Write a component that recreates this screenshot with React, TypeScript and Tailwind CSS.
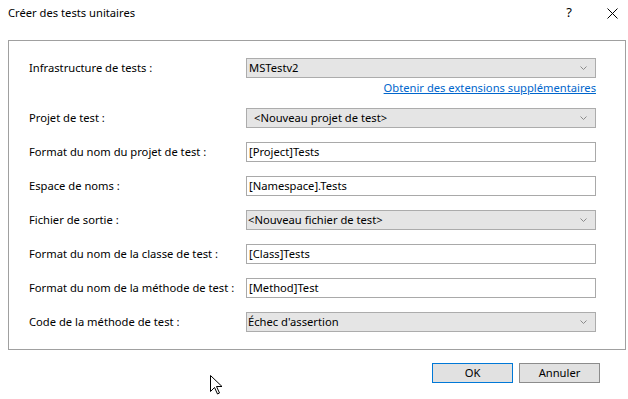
import React from 'react';

const font = { fontFamily: '"Noto Sans", "Segoe UI", Arial, sans-serif' };

const Chevron = () => (
  <svg width="7" height="5" viewBox="0 0 7 5" className="absolute right-[8px] top-1/2 -translate-y-1/2">
    <path d="M0.5 1 L3.5 4 L6.5 1" fill="none" stroke="#8a8a8a" strokeWidth="1" />
  </svg>
);

const Select = ({ value, pad = 'pl-[2px]' }: { value: string; pad?: string }) => (
  <div className={`relative flex h-[20px] w-[350px] items-center border border-[#acacac] bg-[#e5e5e5] ${pad} text-[11.2px] text-black`}>
    <span className="leading-none">{value}</span>
    <Chevron />
  </div>
);

const Input = ({ value }: { value: string }) => (
  <div className="flex h-[20px] w-[350px] items-center border border-[#a9a9a9] bg-white pl-[2px] text-[11.2px] text-black">
    <span className="leading-none">{value}</span>
  </div>
);

const Row = ({ label, children }: { label: string; children: React.ReactNode }) => (
  <div className="flex h-[20px] items-center">
    <div className="w-[217px] whitespace-nowrap text-[11.2px] text-black">{label}</div>
    {children}
  </div>
);

export default function App() {
  return (
    <div className="relative h-[399px] w-[628px] overflow-hidden bg-white" style={font}>
      {/* Title bar */}
      <div className="flex h-[26px] items-center pl-[8px] pr-[10px]">
        <span className="text-[11.2px] text-black">Créer des tests unitaires</span>
        <span className="ml-auto mr-[35px] text-[13px] text-black">?</span>
        <svg width="11" height="11" viewBox="0 0 11 11">
          <path d="M0.5 0.5 L10.5 10.5 M10.5 0.5 L0.5 10.5" stroke="#000" strokeWidth="1" />
        </svg>
      </div>

      {/* Panel */}
      <div className="ml-[8px] mt-[14px] w-[618px] border border-[#a0a0a0] pl-[20px] pt-[17px] pb-[17px]">
        <Row label="Infrastructure de tests :">
          <Select value="MSTestv2" />
        </Row>
        <div className="flex h-[30px] w-[567px] justify-end pt-[2px]">
          <span className="text-[11.2px] text-[#0066cc] underline">Obtenir des extensions supplémentaires</span>
        </div>
        <div className="flex flex-col gap-[14px]">
          <Row label="Projet de test :">
            <Select value="<Nouveau projet de test>" pad="pl-[7px]" />
          </Row>
          <Row label="Format du nom du projet de test :">
            <Input value="[Project]Tests" />
          </Row>
          <Row label="Espace de noms :">
            <Input value="[Namespace].Tests" />
          </Row>
          <Row label="Fichier de sortie :">
            <Select value="<Nouveau fichier de test>" pad="pl-[1px]" />
          </Row>
          <Row label="Format du nom de la classe de test :">
            <Input value="[Class]Tests" />
          </Row>
          <Row label="Format du nom de la méthode de test :">
            <Input value="[Method]Test" />
          </Row>
          <Row label="Code de la méthode de test :">
            <Select value="Échec d'assertion" pad="pl-[1px]" />
          </Row>
        </div>
      </div>

      {/* Buttons */}
      <div className="mt-[13px] flex justify-end gap-[6px] pr-[28px]">
        <button className="h-[20px] w-[81px] border border-[#0078d7] bg-[#e1e1e1] text-[11.2px] text-black">OK</button>
        <button className="h-[20px] w-[81px] border border-[#8c8c8c] bg-[#e1e1e1] text-[11.2px] text-black">Annuler</button>
      </div>

      {/* Mouse cursor */}
      <svg className="absolute left-[210px] top-[375px]" width="13" height="20" viewBox="0 0 13 20">
        <path d="M0.5 0.5 L0.5 16.5 L4.5 12.5 L7.5 19 L9.5 18 L6.5 11.5 L12 11.5 Z" fill="#fff" stroke="#000" strokeWidth="1" strokeLinejoin="miter" />
      </svg>
    </div>
  );
}
